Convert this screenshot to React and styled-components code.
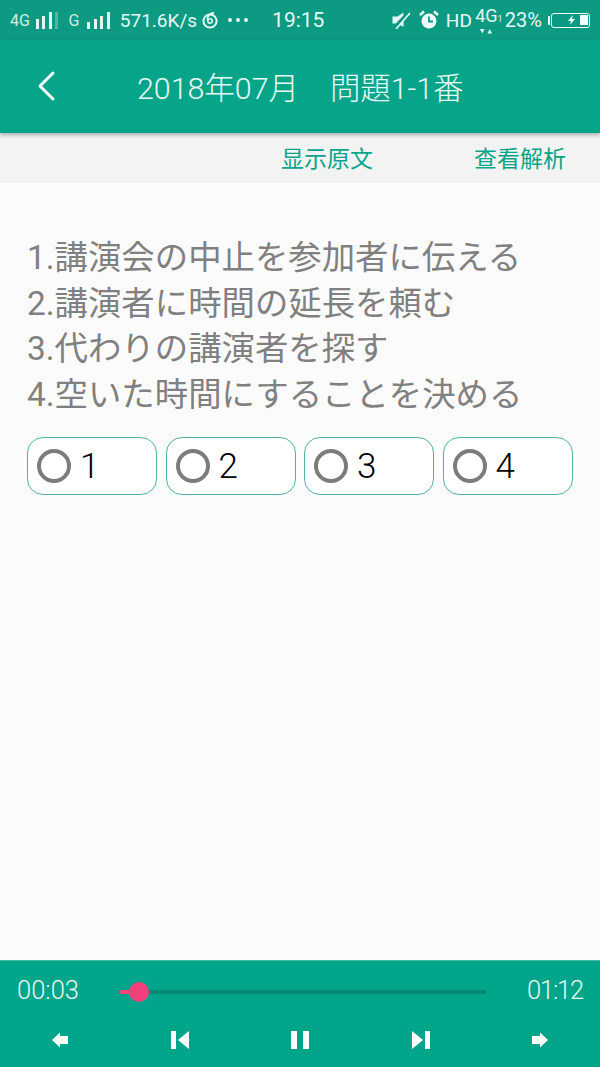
import React from "react";
import styled, { createGlobalStyle } from "styled-components";

const GlobalStyle = createGlobalStyle`
	html, body {
		margin: 0;
		padding: 0;
		background: #fbfbfb;
	}
	* {
		box-sizing: border-box;
	}
`;

const options = [1, 2, 3, 4];
const lines = [
	"1.講演会の中止を参加者に伝える",
	"2.講演者に時間の延長を頼む",
	"3.代わりの講演者を探す",
	"4.空いた時間にすることを決める",
];

function Bars({ count, dim }) {
	const heights = [7, 10, 13, 17];
	return (
		<BarsWrap>
			{heights.slice(4 - count).map((h, i) => (
				<Bar key={i} $height={h} />
			))}
			{dim && <Bar $height={17} $dim />}
		</BarsWrap>
	);
}

function App() {
	return (
		<Page>
			<GlobalStyle />
			<StatusBar>
				<StatusSmall>4G</StatusSmall>
				<Bars count={3} dim />
				<StatusSmall $left={10} $right={8}>
					G
				</StatusSmall>
				<Bars count={4} />
				<StatusText $left={10}>571.6K/s</StatusText>
				<svg width="18" height="18" viewBox="0 0 18 18" style={{ marginLeft: 4 }}>
					<circle cx="9" cy="10" r="6.6" fill="none" stroke="#e6f7f3" strokeWidth="2" />
					<circle cx="9" cy="10" r="2.2" fill="none" stroke="#e6f7f3" strokeWidth="1.6" />
					<path d="M6.5 9 C6 5 9 2 13 2" fill="none" stroke="#e6f7f3" strokeWidth="1.8" />
				</svg>
				<Dots>
					<i />
					<i />
					<i />
				</Dots>
				<Clock>19:15</Clock>
				<StatusRight>
					<svg width="18" height="18" viewBox="0 0 18 18">
						<path d="M0.5 5.5h5l6-4V16l-6-3.5h-5z" fill="#e6f7f3" />
						<path d="M1 18L17 1" stroke="#0d9a83" strokeWidth="3.4" />
						<path d="M4 18L18 2" stroke="#e6f7f3" strokeWidth="1.6" />
					</svg>
					<svg width="20" height="20" viewBox="0 0 20 20" style={{ marginLeft: 9 }}>
						<circle cx="10" cy="11" r="7.5" fill="#f2fbf9" />
						<path d="M10 6.5V11.5H14" fill="none" stroke="#0d9a83" strokeWidth="1.8" />
						<path d="M1 5L5 1.5M19 5L15 1.5" stroke="#f2fbf9" strokeWidth="2.4" />
					</svg>
					<StatusText $left={7}>HD</StatusText>
					<NetBlock>
						<NetTop>
							4G<sub>1</sub>
						</NetTop>
						<NetArrows viewBox="0 0 14 6">
							<path d="M1 1h4.5L3.2 5.5zM8.5 5.5h4.5L10.7 1z" fill="#e6f7f3" />
						</NetArrows>
					</NetBlock>
					<BatteryPercent>23%</BatteryPercent>
					<BatteryNub />
					<Battery>
						<BatteryBolt viewBox="0 0 10 10">
							<path d="M6 0L1 6h3l-1 4 5-6H5z" fill="#f2fbf9" />
						</BatteryBolt>
						<BatteryFill />
					</Battery>
				</StatusRight>
			</StatusBar>

			<Header>
				<BackButton>
					<svg width="20" height="32" viewBox="0 0 20 32">
						<path
							d="M17 3L4 16l13 13"
							fill="none"
							stroke="#f5fdfb"
							strokeWidth="3"
							strokeLinecap="round"
							strokeLinejoin="round"
						/>
					</svg>
				</BackButton>
				<Title>
					<span>2018年07月</span>
					<span>問題1-1番</span>
				</Title>
			</Header>

			<SubBar>
				<SubLink>显示原文</SubLink>
				<SubLink>查看解析</SubLink>
			</SubBar>

			<Content>
				<Question>
					{lines.map((line) => (
						<Line key={line}>{line}</Line>
					))}
				</Question>
				<Options>
					{options.map((n) => (
						<Option key={n}>
							<Radio />
							<OptionLabel>{n}</OptionLabel>
						</Option>
					))}
				</Options>
			</Content>

			<Player>
				<ProgressRow>
					<Time>00:03</Time>
					<Track>
						<Played />
						<Thumb />
					</Track>
					<Time $tight>01:12</Time>
				</ProgressRow>
				<Controls>
					<svg width="18" height="18" viewBox="0 0 18 18">
						<path d="M1 9l8-7.5V5h8v8H9v3.5z" fill="#fff" />
					</svg>
					<svg width="20" height="20" viewBox="0 0 20 20">
						<path d="M1 1h5v18H1zM19 1v18L8 10z" fill="#fff" />
					</svg>
					<svg width="20" height="20" viewBox="0 0 20 20">
						<path d="M1 1h6v18H1zM13 1h6v18h-6z" fill="#fff" />
					</svg>
					<svg width="20" height="20" viewBox="0 0 20 20">
						<path d="M19 1h-5v18h5zM1 1v18l11-9z" fill="#fff" />
					</svg>
					<svg width="18" height="18" viewBox="0 0 18 18">
						<path d="M17 9L9 1.5V5H1v8h8v3.5z" fill="#fff" />
					</svg>
				</Controls>
			</Player>
		</Page>
	);
}

const Page = styled.div`
	width: 600px;
	height: 1067px;
	display: flex;
	flex-direction: column;
	overflow: hidden;
	font-family: Roboto, "Noto Sans CJK JP", sans-serif;
	background: #fbfbfb;
`;

const StatusBar = styled.div`
	height: 40px;
	flex: none;
	display: flex;
	align-items: center;
	padding: 0 10px;
	background: #0d9a83;
	color: #e6f7f3;
`;

const StatusSmall = styled.span`
	font-size: 16px;
	margin-left: ${(p) => p.$left || 0}px;
	margin-right: ${(p) => p.$right || 6}px;
	opacity: 0.9;
`;

const StatusText = styled.span`
	font-size: 19px;
	margin-left: ${(p) => p.$left || 0}px;
`;

const BatteryPercent = styled.span`
	font-size: 20px;
	margin-left: 2px;
`;

const BarsWrap = styled.span`
	display: flex;
	align-items: flex-end;
	gap: 3.5px;
	height: 17px;
`;

const Bar = styled.i`
	width: 3px;
	height: ${(p) => p.$height}px;
	background: #e6f7f3;
	opacity: ${(p) => (p.$dim ? 0.3 : 1)};
`;

const Dots = styled.span`
	display: flex;
	gap: 4px;
	margin-left: 9px;

	i {
		width: 4px;
		height: 4px;
		border-radius: 50%;
		background: #e6f7f3;
	}
`;

const Clock = styled.span`
	font-size: 21px;
	margin-left: 24px;
`;

const StatusRight = styled.div`
	margin-left: auto;
	display: flex;
	align-items: center;
`;

const NetBlock = styled.span`
	display: flex;
	flex-direction: column;
	align-items: center;
	margin-left: 3px;
	width: 28px;
`;

const NetTop = styled.span`
	font-size: 18px;
	line-height: 18px;

	sub {
		font-size: 9px;
		vertical-align: baseline;
	}
`;

const NetArrows = styled.svg`
	width: 14px;
	height: 6px;
	margin-right: 6px;
`;

const BatteryNub = styled.i`
	width: 2px;
	height: 9px;
	margin-left: 6px;
	margin-right: 1px;
	background: #e6f7f3;
	border-radius: 1px 0 0 1px;
`;

const Battery = styled.span`
	position: relative;
	width: 39px;
	height: 15px;
	border: 1.5px solid #f2fbf9;
	border-radius: 3px;
	display: flex;
	align-items: center;
	justify-content: flex-end;
	padding-right: 1px;
`;

const BatteryBolt = styled.svg`
	position: absolute;
	left: 15px;
	top: 1px;
	width: 10px;
	height: 10px;
`;

const BatteryFill = styled.i`
	width: 8px;
	height: 10px;
	background: #f2fbf9;
`;

const Header = styled.div`
	position: relative;
	z-index: 1;
	height: 93px;
	flex: none;
	display: flex;
	align-items: center;
	padding: 0 0 0 36px;
	background: #06a58a;
	box-shadow: 0 2px 4px rgba(0, 0, 0, 0.3);
`;

const BackButton = styled.div`
	width: 20px;
	height: 32px;
	margin-top: -1px;
`;

const Title = styled.div`
	margin-left: 81px;
	display: flex;
	gap: 31px;
	color: #e8f8f5;
	font-size: 30.4px;
	font-weight: 300;
	margin-top: -2px;
`;

const SubBar = styled.div`
	height: 50px;
	flex: none;
	display: flex;
	align-items: center;
	justify-content: flex-end;
	gap: 101px;
	padding: 0 34px 2px 0;
	background: #f3f3f3;
`;

const SubLink = styled.span`
	font-size: 23px;
	color: #06a58a;
	font-family: "Noto Sans CJK SC", sans-serif;
`;

const Content = styled.div`
	flex: 1;
	padding: 52px 26px 0 27px;
	background: #fbfbfb;
`;

const Question = styled.div`
	color: #808080;
	font-size: 33.4px;
	line-height: 45.5px;
`;

const Line = styled.div`
	white-space: nowrap;
`;

const Options = styled.div`
	display: grid;
	grid-template-columns: repeat(4, 130px);
	gap: 8.5px;
	margin-top: 20px;
`;

const Option = styled.div`
	height: 58px;
	display: flex;
	align-items: center;
	padding-left: 9px;
	background: #fff;
	border: 1.5px solid #4db3a3;
	border-radius: 16px;
`;

const Radio = styled.span`
	width: 34px;
	height: 34px;
	border: 4px solid #7c7c7c;
	border-radius: 50%;
`;

const OptionLabel = styled.span`
	margin-left: 9px;
	font-size: 35px;
	font-weight: 300;
	color: #000;
	margin-top: 1px;
`;

const Player = styled.div`
	height: 107px;
	flex: none;
	display: flex;
	flex-direction: column;
	background: #00a58a;
	border-top: 1px solid #3fb8a3;
`;

const ProgressRow = styled.div`
	display: flex;
	align-items: center;
	justify-content: space-between;
	padding: 9px 17px 0;
	height: 55px;
`;

const Time = styled.span`
	color: #e8f8f5;
	font-size: 25.5px;
	font-weight: 300;
	margin-top: -6px;
	letter-spacing: ${(p) => (p.$tight ? "-1.2px" : "0")};
`;

const Track = styled.div`
	position: relative;
	width: 366px;
	height: 4px;
	margin-top: -2px;
	background: #058a74;
`;

const Played = styled.div`
	position: absolute;
	left: 0;
	top: 0;
	width: 18px;
	height: 4px;
	background: #f4457c;
`;

const Thumb = styled.div`
	position: absolute;
	left: 9px;
	top: -8px;
	width: 20px;
	height: 20px;
	border-radius: 50%;
	background: #f4407a;
`;

const Controls = styled.div`
	display: flex;
	align-items: center;
	justify-content: space-between;
	padding: 0 51px;
	height: 44px;
	margin-top: 2px;
`;

export default App;
